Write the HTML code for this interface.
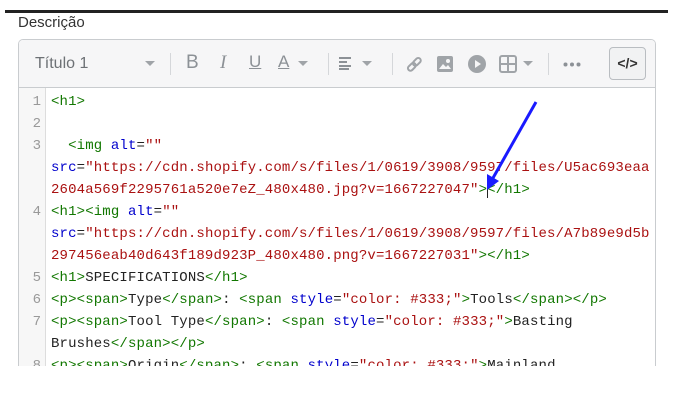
<!DOCTYPE html>
<html><head><meta charset="utf-8"><style>
body{margin:0;width:690px;height:401px;background:#fff;position:relative;overflow:hidden;font-family:"Liberation Sans",sans-serif}
.topline{position:absolute;left:5px;top:10px;width:663px;height:3px;background:#222}
.lbl{position:absolute;left:18px;top:14px;font-size:15px;color:#333}
.box{position:absolute;left:18px;top:39px;width:636px;height:340px;border:1px solid #c9cccf;border-radius:5px;border-bottom:none;overflow:hidden}
.tb{position:absolute;left:0;top:0;width:636px;height:47px;background:#f6f6f7;border-bottom:1px solid #c9cccf}
.t{position:absolute;color:#8c9196;font-size:15px}
.dv{position:absolute;top:13px;width:1px;height:22px;background:#d5d7da}
.car{position:absolute;top:21px;width:0;height:0;border-left:5px solid transparent;border-right:5px solid transparent;border-top:5px solid #a0a4a8}
.cb{position:absolute;left:590px;top:7px;width:35px;height:31px;border:1px solid #b9bdc1;border-radius:4px;background:#f1f2f3;font-weight:bold;font-size:14px;color:#333;text-align:center;line-height:31px}
.code{position:absolute;left:0;top:48px;width:636px;height:300px}
.gut{position:absolute;left:0;top:0;width:26px;height:300px;background:#f7f7f7;border-right:1px solid #ddd}
.ln{position:absolute;left:0;width:22px;text-align:right;font:14px "Liberation Mono",monospace;color:#999}
.cl{position:absolute;left:32px;font:14px "Liberation Mono",monospace;color:#222;white-space:pre;letter-spacing:0.15px}
.g{color:#170}.b{color:#00c}.r{color:#a11}
</style></head><body>
<div class="topline"></div>
<div class="lbl">Descrição</div>
<div class="box">
 <div class="tb">
  <div class="t" style="left:16px;top:15px;color:#6d7175;font-size:16px">Título 1</div>
  <div class="car" style="left:126px"></div>
  <div class="dv" style="left:151px"></div>
  <div class="t" style="left:167px;top:12px;font-size:19px">B</div>
  <div class="t" style="left:201px;top:12px;font-size:19px;font-style:italic;font-family:'Liberation Serif',serif">I</div>
  <div class="t" style="left:230px;top:12px;font-size:17px;text-decoration:underline">U</div>
  <div class="t" style="left:259px;top:12px;font-size:17px;text-decoration:underline">A</div>
  <div class="car" style="left:279px"></div>
  <div class="dv" style="left:309px"></div>
  <svg style="position:absolute;left:320px;top:16px" width="16" height="14"><g stroke="#8c9196" stroke-width="2"><line x1="0" y1="2" x2="12" y2="2"/><line x1="0" y1="6" x2="8" y2="6"/><line x1="0" y1="10" x2="12" y2="10"/><line x1="0" y1="13" x2="10" y2="13"/></g></svg>
  <div class="car" style="left:343px"></div>
  <div class="dv" style="left:373px"></div>
  <svg style="position:absolute;left:386px;top:15px" width="18" height="18"><g fill="none" stroke="#a0a4a8" stroke-width="2"><rect x="1" y="7" width="9" height="5" rx="2.5" transform="rotate(-45 9 9)"/><rect x="8" y="7" width="9" height="5" rx="2.5" transform="rotate(-45 9 9)"/></g></svg>
  <svg style="position:absolute;left:417px;top:15px" width="18" height="18"><rect x="1" y="1" width="16" height="16" rx="2" fill="#a0a4a8"/><path d="M3 14l4-5 3 3 2-2 3 4z" fill="#f6f6f7"/><circle cx="12" cy="6" r="2" fill="#f6f6f7"/></svg>
  <svg style="position:absolute;left:448px;top:14px" width="20" height="20"><circle cx="10" cy="10" r="9" fill="#a0a4a8"/><path d="M8 6l6 4-6 4z" fill="#f6f6f7"/></svg>
  <svg style="position:absolute;left:480px;top:15px" width="18" height="18"><g fill="none" stroke="#a0a4a8" stroke-width="2"><rect x="1" y="1" width="16" height="16" rx="2"/><line x1="9" y1="1" x2="9" y2="17"/><line x1="1" y1="9" x2="17" y2="9"/></g></svg>
  <div class="car" style="left:504px"></div>
  <div class="dv" style="left:529px"></div>
  <svg style="position:absolute;left:544px;top:22px" width="18" height="5"><g fill="#8c9196"><circle cx="2.5" cy="2.5" r="2"/><circle cx="9" cy="2.5" r="2"/><circle cx="15.5" cy="2.5" r="2"/></g></svg>
  <div class="cb">&lt;/&gt;</div>
 </div>
 <div class="code">
  <div class="gut"></div>
  <div class="ln" style="top:6px">1</div>
  <div class="ln" style="top:28px">2</div>
  <div class="ln" style="top:50px">3</div>
  <div class="ln" style="top:116px">4</div>
  <div class="ln" style="top:182px">5</div>
  <div class="ln" style="top:204px">6</div>
  <div class="ln" style="top:226px">7</div>
  <div class="ln" style="top:270px">8</div>
  <div class="cl" style="top:6px"><span class="g">&lt;h1&gt;</span></div>
  <div class="cl" style="top:50px">  <span class="g">&lt;img</span> <span class="b">alt</span>=<span class="r">""</span></div>
  <div class="cl" style="top:72px"><span class="b">src</span>=<span class="r">"https://cdn.shopify.com/s/files/1/0619/3908/9597/files/U5ac693eaa</span></div>
  <div class="cl" style="top:94px"><span class="r">2604a569f2295761a520e7eZ_480x480.jpg?v=1667227047"</span><span class="g">&gt;&lt;/h1&gt;</span></div>
  <div class="cl" style="top:116px"><span class="g">&lt;h1&gt;&lt;img</span> <span class="b">alt</span>=<span class="r">""</span></div>
  <div class="cl" style="top:138px"><span class="b">src</span>=<span class="r">"https://cdn.shopify.com/s/files/1/0619/3908/9597/files/A7b89e9d5b</span></div>
  <div class="cl" style="top:160px"><span class="r">297456eab40d643f189d923P_480x480.png?v=1667227031"</span><span class="g">&gt;&lt;/h1&gt;</span></div>
  <div class="cl" style="top:182px"><span class="g">&lt;h1&gt;</span>SPECIFICATIONS<span class="g">&lt;/h1&gt;</span></div>
  <div class="cl" style="top:204px"><span class="g">&lt;p&gt;&lt;span&gt;</span>Type<span class="g">&lt;/span&gt;</span>: <span class="g">&lt;span</span> <span class="b">style</span>=<span class="r">"color: #333;"</span><span class="g">&gt;</span>Tools<span class="g">&lt;/span&gt;&lt;/p&gt;</span></div>
  <div class="cl" style="top:226px"><span class="g">&lt;p&gt;&lt;span&gt;</span>Tool Type<span class="g">&lt;/span&gt;</span>: <span class="g">&lt;span</span> <span class="b">style</span>=<span class="r">"color: #333;"</span><span class="g">&gt;</span>Basting</div>
  <div class="cl" style="top:248px">Brushes<span class="g">&lt;/span&gt;&lt;/p&gt;</span></div>
  <div class="cl" style="top:270px"><span class="g">&lt;p&gt;&lt;span&gt;</span>Origin<span class="g">&lt;/span&gt;</span>: <span class="g">&lt;span</span> <span class="b">style</span>=<span class="r">"color: #333;"</span><span class="g">&gt;</span>Mainland</div>
 </div>
</div>
<div style="position:absolute;left:0;top:366px;width:690px;height:35px;background:#fff"></div>
<div style="position:absolute;left:487px;top:180px;width:1px;height:18px;background:#222"></div>
<svg style="position:absolute;left:0;top:0" width="690" height="401"><line x1="536" y1="102" x2="493" y2="178" stroke="#1a1aff" stroke-width="3"/><path d="M487 190l0-16 12 7z" fill="#1a1aff"/></svg>
</body></html>
